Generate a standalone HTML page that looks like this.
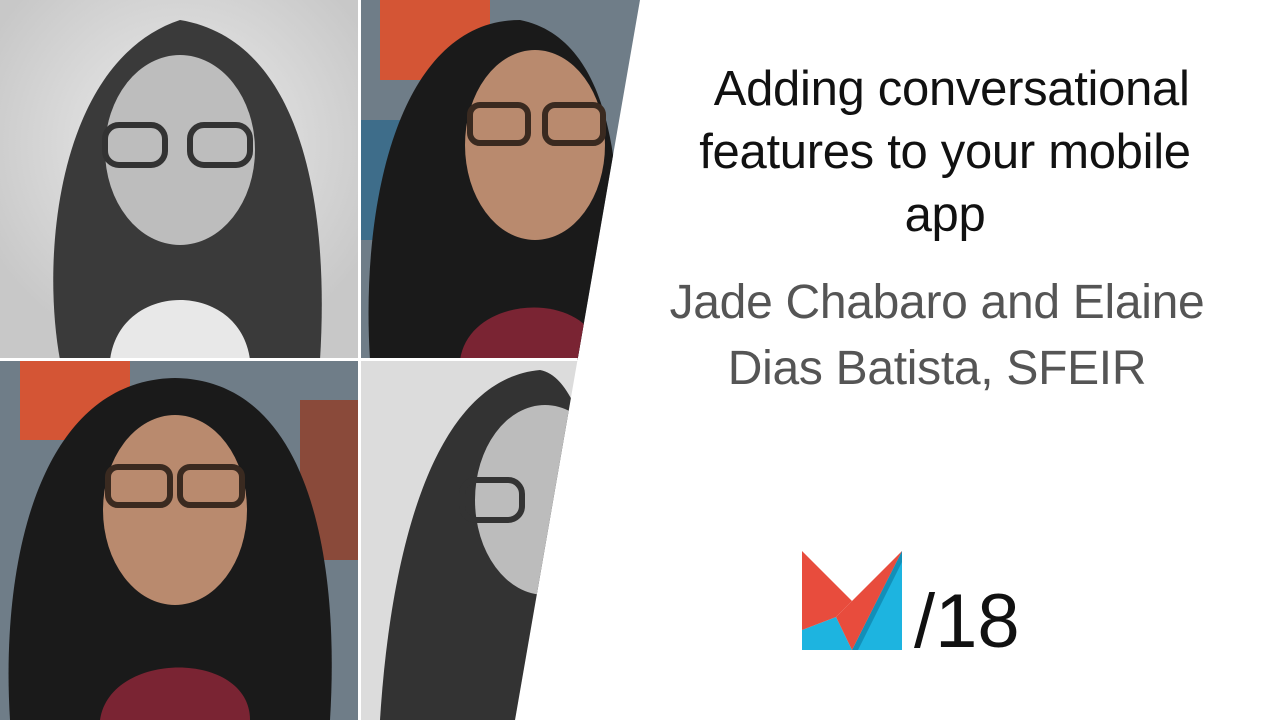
<!DOCTYPE html>
<html><head><style>
body{margin:0;width:1280px;height:720px;overflow:hidden;background:#fff;font-family:"Liberation Sans",sans-serif;position:relative}
.t{position:absolute;left:630px;width:630px;text-align:center;font-size:49px;line-height:63px;letter-spacing:-0.3px}
</style></head><body>
<svg width="1280" height="720" style="position:absolute;left:0;top:0">
<defs>
<clipPath id="c"><polygon points="0,0 640,0 515,720 0,720"/></clipPath>
<radialGradient id="g1" cx="50%" cy="40%" r="60%"><stop offset="0" stop-color="#ececec"/><stop offset="1" stop-color="#c8c8c8"/></radialGradient>
</defs>
<g clip-path="url(#c)">
<rect x="0" y="0" width="360" height="360" fill="url(#g1)"/>
<path d="M60,360 C40,250 60,60 180,20 C300,40 330,200 320,360 Z" fill="#3a3a3a"/>
<ellipse cx="180" cy="150" rx="75" ry="95" fill="#bdbdbd"/>
<path d="M110,360 C120,280 240,280 250,360Z" fill="#e8e8e8"/>
<rect x="105" y="125" width="60" height="40" rx="14" fill="none" stroke="#333" stroke-width="6"/>
<rect x="190" y="125" width="60" height="40" rx="14" fill="none" stroke="#333" stroke-width="6"/>
<rect x="360" y="0" width="290" height="360" fill="#6f7d88"/>
<rect x="380" y="0" width="110" height="80" fill="#d45535"/>
<rect x="360" y="120" width="60" height="120" fill="#3e6d8a"/>
<path d="M370,360 C360,200 400,20 520,20 C620,40 630,200 610,360Z" fill="#1a1a1a"/>
<ellipse cx="535" cy="145" rx="70" ry="95" fill="#b98a6e"/>
<path d="M460,360 C470,290 600,290 600,360Z" fill="#7a2433"/>
<rect x="470" y="105" width="58" height="38" rx="10" fill="none" stroke="#3a2a20" stroke-width="6"/>
<rect x="545" y="105" width="58" height="38" rx="10" fill="none" stroke="#3a2a20" stroke-width="6"/>
<rect x="0" y="360" width="360" height="360" fill="#6f7d88"/>
<rect x="20" y="360" width="110" height="80" fill="#d45535"/>
<rect x="300" y="400" width="60" height="160" fill="#8a4a3a"/>
<path d="M10,720 C0,560 40,380 175,378 C310,380 340,560 330,720Z" fill="#1a1a1a"/>
<ellipse cx="175" cy="510" rx="72" ry="95" fill="#b98a6e"/>
<path d="M100,720 C110,650 250,650 250,720Z" fill="#7a2433"/>
<rect x="108" y="467" width="62" height="38" rx="10" fill="none" stroke="#3a2a20" stroke-width="6"/>
<rect x="180" y="467" width="62" height="38" rx="10" fill="none" stroke="#3a2a20" stroke-width="6"/>
<rect x="360" y="360" width="290" height="360" fill="#dcdcdc"/>
<path d="M380,720 C390,560 430,380 540,370 C600,380 620,600 600,720Z" fill="#333"/>
<ellipse cx="545" cy="500" rx="70" ry="95" fill="#bcbcbc"/>
<rect x="462" y="480" width="60" height="40" rx="14" fill="none" stroke="#333" stroke-width="6"/>
<rect x="358" y="0" width="3" height="720" fill="#fff"/>
<rect x="0" y="358" width="640" height="3" fill="#fff"/>
</g>
<polygon points="802,630 836,617 852,650 802,650" fill="#1db4e0"/>
<polygon points="902,551 902,650 852,650" fill="#1db4e0"/>
<polygon points="902,551 852,650 858,650 902,562" fill="#0f7fa6" opacity=".7"/>
<polygon points="802,551 852,601 836,617 802,630" fill="#e84c3d"/>
<polygon points="902,551 852,650 836,617 852,601" fill="#e84c3d"/>
</svg>
<div class="t" style="top:58px;color:#111">&nbsp;Adding conversational<br>features to your mobile<br>app</div>
<div class="t" style="top:270px;left:622px;color:#555;line-height:66px;font-size:48px">Jade Chabaro and Elaine<br>Dias Batista, SFEIR</div>
<div style="position:absolute;left:914px;top:584px;font-size:76px;line-height:76px;color:#111">/18</div>
</body></html>
